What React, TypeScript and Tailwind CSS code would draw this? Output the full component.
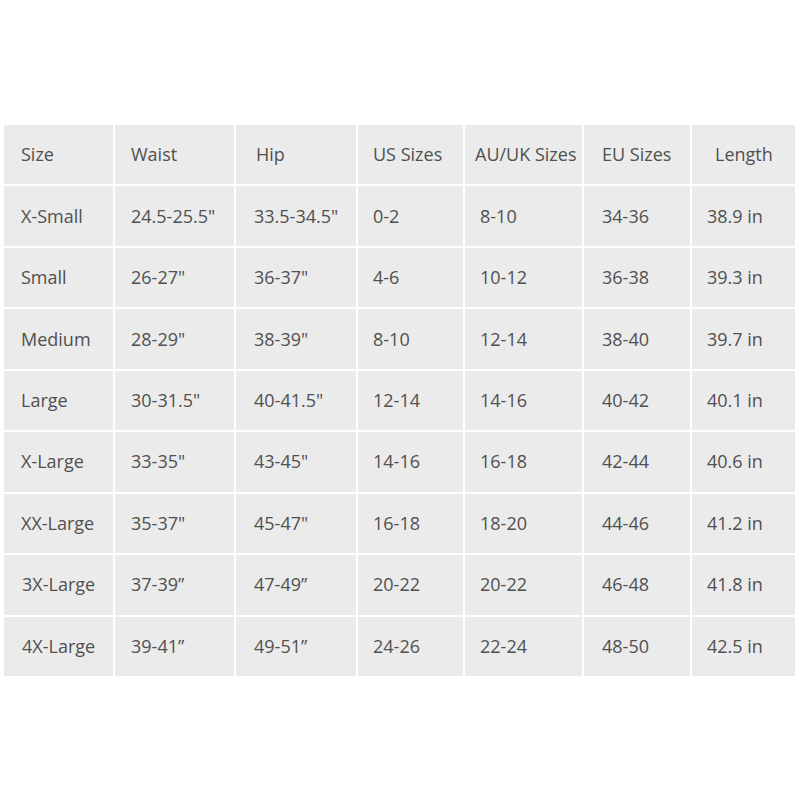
import React from "react";

const headers = ["Size", "Waist", "Hip", "US Sizes", "AU/UK Sizes", "EU Sizes", "Length"];
const rows: string[][] = [
  ["X-Small", "24.5-25.5\"", "33.5-34.5\"", "0-2", "8-10", "34-36", "38.9 in"],
  ["Small", "26-27\"", "36-37\"", "4-6", "10-12", "36-38", "39.3 in"],
  ["Medium", "28-29\"", "38-39\"", "8-10", "12-14", "38-40", "39.7 in"],
  ["Large", "30-31.5\"", "40-41.5\"", "12-14", "14-16", "40-42", "40.1 in"],
  ["X-Large", "33-35\"", "43-45\"", "14-16", "16-18", "42-44", "40.6 in"],
  ["XX-Large", "35-37\"", "45-47\"", "16-18", "18-20", "44-46", "41.2 in"],
  ["3X-Large", "37-39\u201d", "47-49\u201d", "20-22", "20-22", "46-48", "41.8 in"],
  ["4X-Large", "39-41\u201d", "49-51\u201d", "24-26", "22-24", "48-50", "42.5 in"],
];

const headPad = ["pl-[17px]", "pl-[16px]", "pl-[20px]", "pl-[15px]", "pl-[10px]", "pl-[18px]", "pl-[23px]"];
const bodyPad = ["pl-[17px]", "pl-[16px]", "pl-[18px]", "pl-[15px]", "pl-[15px]", "pl-[18px]", "pl-[15px]"];

export default function App() {
  return (
    <div className="w-[800px] h-[800px] bg-white pt-[125px] pl-[4px]" style={{ fontFamily: "'Open Sans', 'Noto Sans', sans-serif" }}>
      <div className="grid w-[791px] h-[551px] grid-cols-[109px_119px_120px_105px_117px_106px_103px] grid-rows-9 gap-[2px] text-[18px] text-[#505050]">
        {headers.map((h, i) => (
          <div key={h} className={`bg-[#ebebeb] flex items-center whitespace-nowrap ${headPad[i]}`}>
            {h}
          </div>
        ))}
        {rows.map((r, ri) =>
          r.map((c, ci) => (
            <div
              key={`${ri}-${ci}`}
              className={`bg-[#ebebeb] flex items-center whitespace-nowrap ${ci === 0 && ri >= 6 ? "pl-[18px]" : bodyPad[ci]}`}
            >
              {c}
            </div>
          ))
        )}
      </div>
    </div>
  );
}
